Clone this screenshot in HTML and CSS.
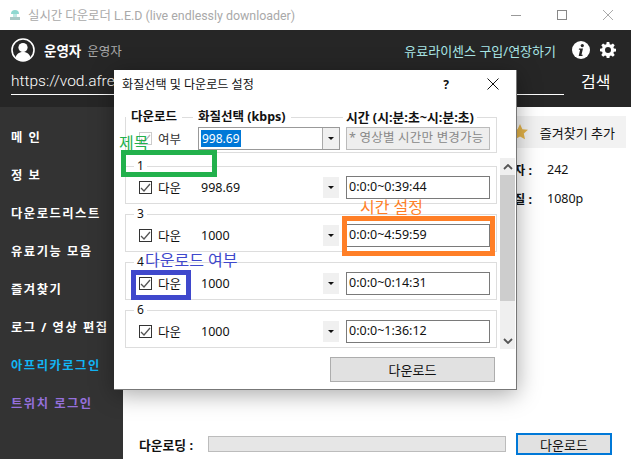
FILE: index.html
```html
<!DOCTYPE html>
<html lang="ko">
<head>
<meta charset="utf-8">
<title>실시간 다운로더 L.E.D</title>
<link rel="stylesheet" href="styles.css">
</head>
<body>
<div class="app">
  <div class="titlebar">
    <svg class="appicon" width="12" height="12" viewBox="0 0 12 12"><path d="M2 5a4 4 0 0 1 8 0z" fill="#8fd8d0"/><rect x="4" y="5" width="4" height="3" fill="#bfe9e4"/><path d="M1 8h10v3H1z" fill="#a9c9c6"/></svg>
    <span class="apptitle">실시간 다운로더 L.E.D (live endlessly downloader)</span>
    <div class="winctl">
      <svg width="12" height="12" viewBox="0 0 12 12"><path d="M1 6.5h10" stroke="#999" fill="none"/></svg>
      <svg width="12" height="12" viewBox="0 0 12 12"><rect x="1.5" y="1.5" width="9" height="9" stroke="#888" fill="none"/></svg>
      <svg width="12" height="12" viewBox="0 0 12 12"><path d="M1 1l10 10M11 1L1 11" stroke="#aaa" fill="none"/></svg>
    </div>
  </div>
  <header class="header">
    <div class="userbar">
      <svg class="avatar" width="24" height="24" viewBox="0 0 24 24"><circle cx="12" cy="12" r="11" fill="none" stroke="#fff" stroke-width="1.6"/><circle cx="12" cy="9.5" r="4.6" fill="#fff"/><path d="M4.6 19.5c1-4 4-5.5 7.4-5.5s6.400 1.500 7.400 5.500A11 11 0 0 1 12 23a11 11 0 0 1-7.400-3.500z" fill="#fff"/></svg>
      <b class="username">운영자</b>
      <span class="userrole">운영자</span>
      <a class="license">유료라이센스 구입/연장하기</a>
      <svg class="infoicon" width="18" height="18" viewBox="0 0 18 18"><circle cx="9" cy="9" r="9" fill="#fff"/><circle cx="10.300" cy="4.600" r="1.600" fill="#262626"/><path d="M7 7.500h4l-1.500 6.200h1.200l-.3 1.200H6.700l1.400-6.200H6.800z" fill="#262626"/></svg>
      <svg class="gearicon" width="16" height="16" viewBox="0 0 16 16"><path fill="#fff" fill-rule="evenodd" d="M6.700 0h2.600l.4 2.200 1.300.6L12.900 1.500l1.800 1.800-1.300 1.900.5 1.200 2.100.4v2.600l-2.100.4-.5 1.300 1.300 1.800-1.800 1.800-1.900-1.300-1.200.5-.4 2.200H6.700l-.4-2.200-1.300-.5-1.800 1.300-1.900-1.800 1.300-1.900-.5-1.200L0 9.300V6.700l2.100-.4.500-1.200-1.300-1.800L3.100 1.500 5 2.800l1.300-.6zM8 5a3 3 0 1 0 0 6 3 3 0 0 0 0-6z"/></svg>
    </div>
    <div class="urlbar">
      <div class="urlfield">https://vod.afre</div>
      <span class="searchbtn">검색</span>
    </div>
  </header>
  <div class="main">
    <nav class="sidebar">
      <a class="navitem">메 인</a>
      <a class="navitem">정 보</a>
      <a class="navitem">다운로드리스트</a>
      <a class="navitem">유료기능 모음</a>
      <a class="navitem">즐겨찾기</a>
      <a class="navitem">로그 / 영상 편집</a>
      <a class="navitem nav-afreeca">아프리카로그인</a>
      <a class="navitem nav-twitch">트위치 로그인</a>
    </nav>
    <section class="content">
      <div class="favbar">
        <svg class="star" width="16" height="16" viewBox="0 0 16 16"><path d="M8 0l2.400 5.200 5.600.6-4.200 3.800 1.200 5.600L8 12.400l-5 2.800 1.200-5.600L0 5.800l5.600-.6z" fill="#e3b34a"/></svg>
        <span>즐겨찾기 추가</span>
      </div>
      <div class="inforow"><span class="infolabel">시청자 :</span><span>242</span></div>
      <div class="inforow"><span class="infolabel">화질 :</span><span>1080p</span></div>
      <div class="dlbar">
        <span class="dllabel">다운로딩 :</span>
        <div class="progress"></div>
        <button class="dlbtn">다운로드</button>
      </div>
    </section>
  </div>
</div>

<div class="dialog">
  <div class="dlgtitle">
    <span class="dlgname">화질선택 및 다운로드 설정</span>
    <span class="dlghelp">?</span>
    <svg width="12" height="12" viewBox="0 0 12 12"><path d="M.5.5l11 11M11.500.5l-11 11" stroke="#111" fill="none"/></svg>
  </div>
  <div class="headgroup">
    <fieldset class="hg hg1">
      <legend>다운로드</legend>
      <div class="hgbody">
        <span class="check check-off"><svg width="11" height="11" viewBox="0 0 11 11"><path d="M1 6l3 3 6-7" fill="none" stroke="#bbb" stroke-width="1.300"/></svg></span>
        <span class="lbl">여부</span>
      </div>
    </fieldset>
    <fieldset class="hg hg2">
      <legend>화질선택 (kbps)</legend>
      <div class="select"><span class="selval"><span class="seltext">998.69</span></span><span class="selarrow"></span></div>
    </fieldset>
    <fieldset class="hg hg3">
      <legend>시간 (시:분:초~시:분:초)</legend>
      <div class="timehint">* 영상별 시간만 변경가능</div>
    </fieldset>
  </div>
  <div class="listwrap">
    <div class="rows">
      <fieldset class="row"><legend>1</legend><div class="rowbody"><span class="check"><svg width="11" height="11" viewBox="0 0 11 11"><path d="M1 6l3 3 6-7" fill="none" stroke="#555" stroke-width="1.300"/></svg></span><span class="lbl">다운</span><span class="val">998.69</span><span class="drop"></span><span class="time">0:0:0~0:39:44</span></div></fieldset>
      <fieldset class="row"><legend>3</legend><div class="rowbody"><span class="check"><svg width="11" height="11" viewBox="0 0 11 11"><path d="M1 6l3 3 6-7" fill="none" stroke="#555" stroke-width="1.300"/></svg></span><span class="lbl">다운</span><span class="val">1000</span><span class="drop"></span><span class="time">0:0:0~4:59:59</span></div></fieldset>
      <fieldset class="row"><legend>4</legend><div class="rowbody"><span class="check"><svg width="11" height="11" viewBox="0 0 11 11"><path d="M1 6l3 3 6-7" fill="none" stroke="#555" stroke-width="1.300"/></svg></span><span class="lbl">다운</span><span class="val">1000</span><span class="drop"></span><span class="time">0:0:0~0:14:31</span></div></fieldset>
      <fieldset class="row"><legend>6</legend><div class="rowbody"><span class="check"><svg width="11" height="11" viewBox="0 0 11 11"><path d="M1 6l3 3 6-7" fill="none" stroke="#555" stroke-width="1.300"/></svg></span><span class="lbl">다운</span><span class="val">1000</span><span class="drop"></span><span class="time">0:0:0~1:36:12</span></div></fieldset>
    </div>
    <div class="scrollbar">
      <span class="sbarrow"><svg width="10" height="6" viewBox="0 0 10 6"><path d="M1 5l4-4 4 4" fill="none" stroke="#555" stroke-width="1.800"/></svg></span>
      <span class="sbthumb"></span>
      <span class="sbtrack"></span>
      <span class="sbarrow"><svg width="10" height="6" viewBox="0 0 10 6"><path d="M1 1l4 4 4-4" fill="none" stroke="#555" stroke-width="1.800"/></svg></span>
    </div>
  </div>
  <div class="dlgfoot"><button class="dlgdl">다운로드</button></div>
</div>

<div class="mark mark-green"></div>
<div class="mark mark-orange"></div>
<div class="mark mark-blue"></div>
<span class="note note-green">제목</span>
<span class="note note-orange">시간 설정</span>
<span class="note note-blue">다운로드 여부</span>
</body>
</html>
```
FILE: styles.css
```css
* { box-sizing: border-box; }
html, body { margin: 0; height: 100%; }
body {
  position: relative;
  overflow: hidden;
  background: #fff;
  color: #111;
  font: 12px "Noto Sans", "Noto Sans CJK KR", sans-serif;
}
.app { display: flex; flex-direction: column; height: 459px; }

.titlebar { display: flex; align-items: center; height: 30px; padding-left: 9px; flex: none; }
.appicon { margin-right: 7px; }
.apptitle { color: #a9a9a9; font-family: Roboto, "Noto Sans CJK KR", sans-serif; font-size: 12.400px; white-space: nowrap; }
.winctl { margin-left: auto; display: flex; gap: 34px; padding-right: 17px; }

.header { background: #262626; height: 77px; flex: none; padding: 0 17px 12px 11px; display: flex; flex-direction: column; }
.userbar { display: flex; align-items: center; height: 38px; padding-top: 2px; }
.avatar { margin-right: 9px; }
.username { color: #fff; font-size: 13.500px; margin-right: 6px; }
.userrole { color: #aaa; font-size: 12.500px; }
.license { margin-left: auto; color: #a9e6e6; font-size: 13px; margin-right: 16px; white-space: nowrap; }
.infoicon { margin-right: 10px; }
.gearicon { margin-right: -2px; }
.urlbar { display: flex; align-items: flex-end; flex: 1; }
.urlfield { width: 553px; height: 26px; border-bottom: 1px solid #fff; color: #fff; font-family: Roboto, sans-serif; font-weight: 300; font-size: 15.500px; line-height: 24px; white-space: nowrap; overflow: hidden; }
.searchbtn { color: #fff; font-size: 16px; margin-left: 17px; line-height: 26px; }

.main { display: flex; flex: 1; min-height: 0; }
.sidebar { width: 123px; flex: none; background: #333; padding: 12px 0 0 11px; display: flex; flex-direction: column; }
.navitem { height: 38px; line-height: 38px; color: #fff; font-weight: 700; font-size: 12.300px; letter-spacing: 1.500px; white-space: nowrap; }
.nav-afreeca { color: #12b5f5; }
.nav-twitch { color: #9570dc; }

.content { flex: 1; display: flex; flex-direction: column; padding: 9px 5px 4px 16px; }
.favbar { height: 32px; background: #f2f2f2; display: flex; align-items: center; justify-content: flex-end; padding-right: 11px; gap: 12px; font-size: 13px; }
.star { margin-left: auto; }
.inforow { display: grid; grid-template-columns: 393px auto; column-gap: 15px; height: 29px; align-items: center; font-size: 12.500px; }
.favbar + .inforow { margin-top: 7px; }
.infolabel { text-align: right; font-weight: 700; }
.dlbar { margin-top: auto; display: flex; align-items: center; }
.dllabel { font-weight: 700; width: 69px; font-size: 12.800px; white-space: nowrap; }
.progress { width: 298px; height: 16px; background: #e6e6e6; border: 1px solid #bcbcbc; }
.dlbtn { margin-left: 10px; width: 96px; height: 22px; background: #e1e1e1; border: 2px solid #0078d7; font: inherit; font-size: 13px; color: #111; padding: 0; }

.dialog {
  position: absolute; left: 114px; top: 70px; width: 403px; height: 320px;
  background: #fff; border: 1px solid #777; border-width: 0 1px 1px 0;
  box-shadow: 0 4px 22px rgba(0,0,0,.35);
  display: flex; flex-direction: column; padding: 0 0 0 11px;
}
.dlgtitle { display: flex; align-items: center; height: 28px; flex: none; margin-left: -3px; padding-right: 17px; font-size: 12.100px; }
.dlgname { margin-right: auto; }
.dlghelp { margin-right: 38px; font-weight: 700; font-size: 12px; }

fieldset { margin: 0; padding: 0; min-width: 0; }
legend { padding: 0 5px; }
.headgroup { display: flex; flex: none; width: 372px; margin-top: 10px; height: 45px; }
.hg { border: 1px solid #ddd; border-width: 1px 0 1px 0; }
.hg legend { font-weight: 700; font-size: 12.500px; line-height: 18px; height: 18px; }
.hg1 { width: 68px; border-left-width: 1px; }
.hg2 { width: 150px; }
.hg3 { width: 154px; border-right-width: 1px; }
.hg3 legend { font-size: 12.800px; padding: 0 3px; }
.hgbody { display: flex; align-items: center; padding: 3px 0 0 13px; }
.check { width: 13px; height: 13px; border: 1px solid #333; display: flex; align-items: center; justify-content: center; flex: none; }
.check-off { border-color: #ccc; }
.hgbody .lbl { color: #333; }
.select { display: flex; width: 142px; height: 23px; margin: 1px 0 0 5px; border: 1px solid #999; align-items: stretch; }
.selval { flex: 1; display: flex; align-items: center; padding-left: 2px; border-right: 1px solid #aaa; }
.seltext { background: #0078d7; color: #fff; line-height: 17px; padding: 0 1px; }
.selarrow { width: 16px; background: #f0f0f0; display: flex; align-items: center; justify-content: center; }
.selarrow::after, .drop::after { content: ""; border: 3.500px solid transparent; border-top-color: #111; border-bottom-width: 0; }
.timehint { width: 144px; height: 23px; margin: 1px 0 0 3px; background: #eee; border: 1px solid #bbb; color: #888; font-size: 12.500px; line-height: 20px; padding-left: 2px; white-space: nowrap; overflow: hidden; letter-spacing: .2px; }

.listwrap { display: flex; flex: none; margin-top: 5px; height: 191px; }
.rows { width: 372px; flex: none; display: flex; flex-direction: column; gap: 2px; overflow: hidden; }
.row { border: 1px solid #ddd; height: 46px; flex: none; padding: 0 6px 0 13px; }
.row legend { font-size: 12px; line-height: 16px; height: 16px; padding: 0 3px; margin-left: -5px; }
.rowbody { display: flex; align-items: center; height: 23px; margin-top: 2px; }
.lbl { margin-left: 6px; width: 24px; white-space: nowrap; font-size: 12.500px; }
.val { margin-left: 19px; width: 122px; font-size: 12.500px; }
.drop { width: 16px; height: 21px; background: #f0f0f0; display: flex; align-items: center; justify-content: center; flex: none; }
.time { margin-left: 7px; width: 144px; height: 23px; border: 1px solid #7a7a7a; line-height: 20px; padding-left: 2px; font-size: 12.500px; }
.scrollbar { margin-left: 3px; width: 15px; display: flex; flex-direction: column; background: #efefef; }
.sbarrow { height: 17px; flex: none; display: flex; align-items: center; justify-content: center; }
.sbthumb { height: 126px; background: #cdcdcd; flex: none; }
.sbtrack { flex: 1; }
.dlgfoot { display: flex; justify-content: flex-end; padding-right: 21px; margin-top: 8px; }
.dlgdl { width: 165px; height: 25px; background: #e1e1e1; border: 1px solid #adadad; font: inherit; font-size: 13px; color: #111; padding: 0; }

.mark { position: absolute; border-style: solid; border-width: 5px; background: transparent; }
.mark-green { left: 121px; top: 150px; width: 96px; height: 27px; border-color: #22b14c; }
.mark-orange { left: 342px; top: 216px; width: 153px; height: 40px; border-color: #ff7f27; }
.mark-blue { left: 131px; top: 270px; width: 60px; height: 30px; border-color: #3f48cc; }
.note { position: absolute; white-space: nowrap; font-size: 16px; line-height: 18px; }
.note-green { left: 119px; top: 134px; color: #22b14c; }
.note-orange { left: 360px; top: 198px; color: #ff7f27; }
.note-blue { left: 145px; top: 251px; color: #3f48cc; }
```
